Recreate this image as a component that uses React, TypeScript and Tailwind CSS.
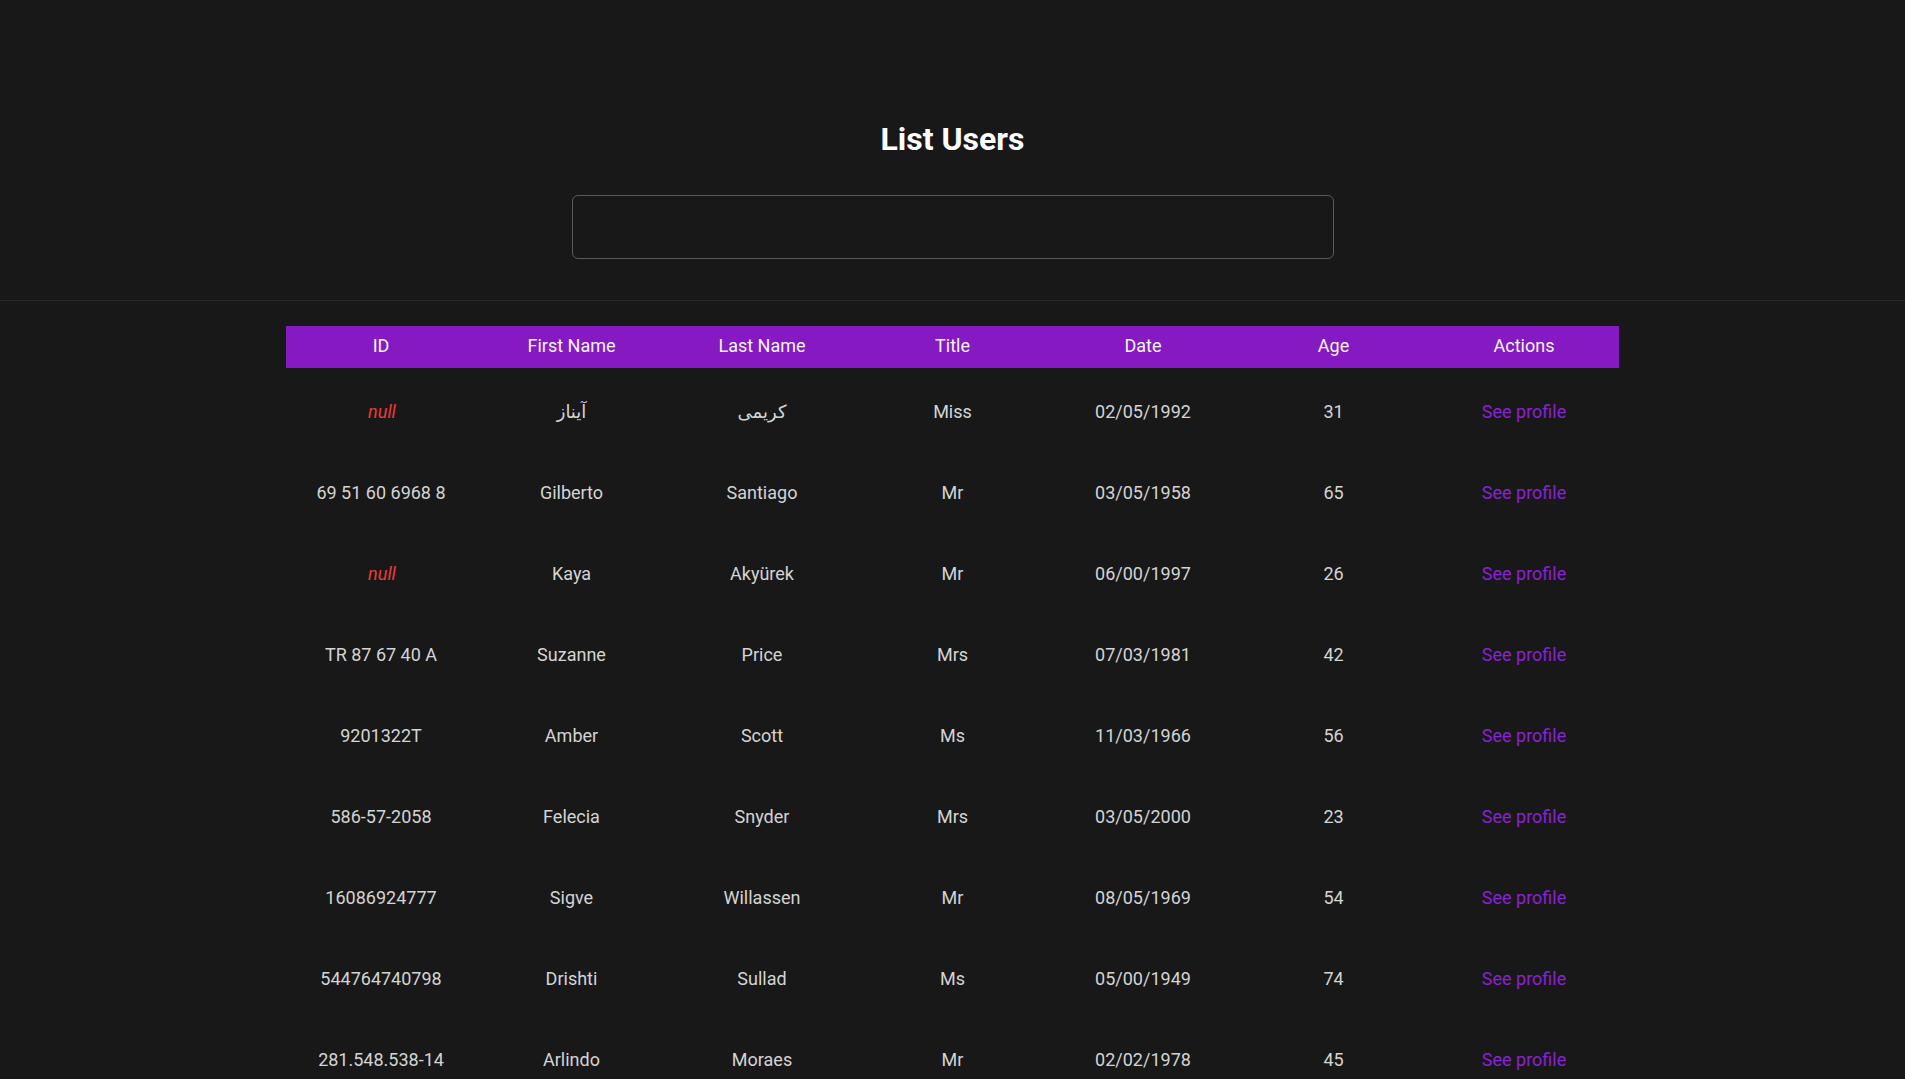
import { useState } from 'react';

type User = {
  id: string | null;
  firstName: string;
  lastName: string;
  title: string;
  date: string;
  age: number;
};

const users: User[] = [
  { id: null, firstName: 'آیناز', lastName: 'کریمی', title: 'Miss', date: '02/05/1992', age: 31 },
  { id: '69 51 60 6968 8', firstName: 'Gilberto', lastName: 'Santiago', title: 'Mr', date: '03/05/1958', age: 65 },
  { id: null, firstName: 'Kaya', lastName: 'Akyürek', title: 'Mr', date: '06/00/1997', age: 26 },
  { id: 'TR 87 67 40 A', firstName: 'Suzanne', lastName: 'Price', title: 'Mrs', date: '07/03/1981', age: 42 },
  { id: '9201322T', firstName: 'Amber', lastName: 'Scott', title: 'Ms', date: '11/03/1966', age: 56 },
  { id: '586-57-2058', firstName: 'Felecia', lastName: 'Snyder', title: 'Mrs', date: '03/05/2000', age: 23 },
  { id: '16086924777', firstName: 'Sigve', lastName: 'Willassen', title: 'Mr', date: '08/05/1969', age: 54 },
  { id: '544764740798', firstName: 'Drishti', lastName: 'Sullad', title: 'Ms', date: '05/00/1949', age: 74 },
  { id: '281.548.538-14', firstName: 'Arlindo', lastName: 'Moraes', title: 'Mr', date: '02/02/1978', age: 45 },
];

const columns = ['ID', 'First Name', 'Last Name', 'Title', 'Date', 'Age', 'Actions'];

export default function App() {
  const [query, setQuery] = useState('');

  return (
    <div className="min-h-screen bg-[#181818] font-['Roboto','DejaVu_Sans','Noto_Sans',sans-serif] text-[#d4d4d4]">
      {/* Header */}
      <header className="flex flex-col items-center pt-[120px] pb-[41px] border-b border-[#2a2a2a]">
        <h1 className="text-[32px] leading-[38px] font-bold text-white">List Users</h1>
        <input
          type="text"
          value={query}
          onChange={(e) => setQuery(e.target.value)}
          className="mt-[37px] w-[40%] h-[64px] px-4 bg-transparent border border-[#5a5a5a] rounded-[6px] text-[18px] text-white outline-none"
        />
      </header>

      {/* Users table */}
      <div className="flex justify-center pt-[25px]">
        <table className="w-[70%] table-fixed border-collapse text-[18px]">
          <thead>
            <tr className="bg-[#851ac2] h-[42px]">
              {columns.map((col) => (
                <th key={col} className="font-normal text-[#f4f4f4] text-center pb-[3px]">
                  {col}
                </th>
              ))}
            </tr>
          </thead>
          <tbody>
            <tr className="h-[3px]">
              <td colSpan={7} />
            </tr>
            {users.map((u, i) => (
              <tr key={i} className="h-[81px] text-center">
                <td>
                  {u.id === null ? (
                    <span className="italic text-[#ef3a3a] pl-[2px]">null</span>
                  ) : (
                    u.id
                  )}
                </td>
                <td>{u.firstName}</td>
                <td>{u.lastName}</td>
                <td>{u.title}</td>
                <td>{u.date}</td>
                <td>{u.age}</td>
                <td>
                  <a href="#" className="text-[#8a22d6]">
                    See profile
                  </a>
                </td>
              </tr>
            ))}
          </tbody>
        </table>
      </div>
    </div>
  );
}
